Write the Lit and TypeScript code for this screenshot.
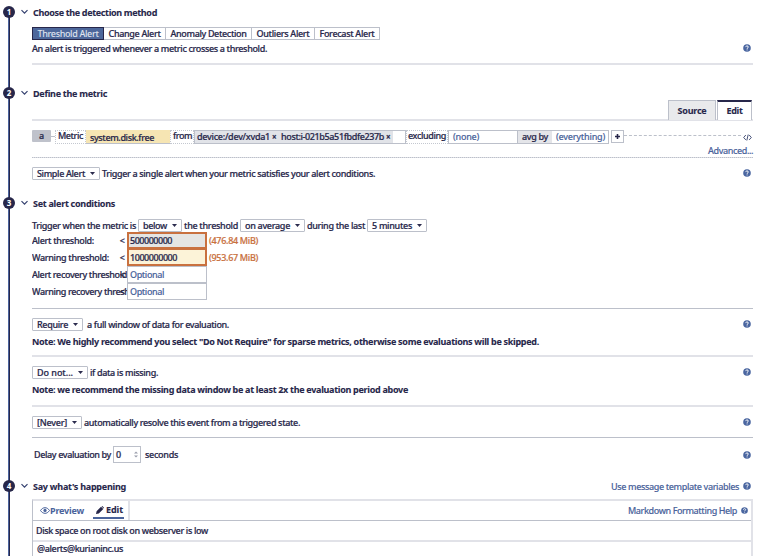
import { LitElement, html, css } from "lit";
import { customElement, property } from "lit/decorators.js";

/** A label whose tracking is set so that it fills the given width. */
@customElement("fit-label")
class FitLabel extends LitElement {
  @property({ type: Number }) w = 0;
  static styles = css`
    :host { display: inline-block; white-space: pre; flex: none; text-align: left; padding-top: 1px; }
    .s { display: inline-block; }
  `;
  render() {
    return html`<span class="s"><slot></slot></span>`;
  }
  firstUpdated() {
    const s = this.renderRoot.querySelector(".s") as HTMLElement;
    const n = (this.textContent || "").length;
    const natural = s.getBoundingClientRect().width;
    this.style.letterSpacing = ((this.w - natural) / n).toFixed(3) + "px";
    this.style.width = this.w + "px";
  }
}

const t = (text: string, w: number, cls = "") =>
  html`<fit-label class=${cls} w=${w}>${text}</fit-label>`;

const help = (small = false) => html`<svg class="help ${small ? "small" : ""}" viewBox="0 0 8 8">
  <circle cx="4" cy="4" r="3.8" fill="#4a66a0"></circle>
  <path d="M2.8 3.1C2.9 2.2 3.4 1.9 4 1.9c.8 0 1.3.5 1.3 1.1C5.3 3.8 4.1 3.9 4.1 4.8M4.1 5.5v.9" fill="none" stroke="#fff" stroke-width="1"></path>
</svg>`;

const caret = html`<svg class="caret" viewBox="0 0 5 3"><path d="M0 0h5L2.5 3z" fill="#2c2c4e"></path></svg>`;

const select = (text: string, w: number, tw: number) =>
  html`<div class="select" style="width:${w}px">${t(text, tw)}${caret}</div>`;

@customElement("app-root")
class AppRoot extends LitElement {
  static styles = css`
    :host {
      display: block; width: 760px; height: 556px; overflow: hidden; background: #fff;
      font: 500 9px/14px "Noto Sans", "Open Sans", sans-serif; color: #27274a;
      -webkit-text-stroke: .2px currentColor;
    }
    * { box-sizing: border-box; }
    svg { display: block; flex: none; }
    .page { display: flex; flex-direction: column; }
    .section { display: grid; grid-template-columns: 18px 14px 721px; }
    .rail { background: linear-gradient(90deg, #4b639c 1px, #27274a 1px) 8px 0 / 2px 100% no-repeat; }
    .first .rail { background-position: 8px 12px; }
    .dot {
      margin: 6px 0 0 3px; width: 12px; height: 12px; border-radius: 50%; background: #27274a; color: #fff;
      font-weight: 700; font-size: 8px; line-height: 12px; text-align: center; -webkit-text-stroke: 0;
    }
    .chev { margin: 9px 0 0 3px; width: 7px; height: 6px; }
    .s1 { height: 81px; } .s2 { height: 110px; } .s3 { height: 283px; } .s4 { height: 82px; }
    .head { height: 24px; display: flex; align-items: center; justify-content: space-between; padding-left: 1px; }
    .b { font-weight: 700; -webkit-text-stroke: .1px currentColor; }
    .blue { color: #4a639b; -webkit-text-stroke: .12px #4a639b; }
    .blue.b { -webkit-text-stroke: 0; }
    .orange { color: #c9713f; -webkit-text-stroke: .2px #c9713f; }
    .row { display: flex; align-items: center; height: 14px; }
    .help { width: 8px; height: 8px; margin: 0 2px 0 auto; }
    .caret { width: 5px; height: 3px; }
    .hr { height: 1px; background: #bcc0ca; }
    .hr.thick { height: 2px; background: #e1e2e8; }
    .hr.dots { background: repeating-linear-gradient(90deg, #bcc0ca 0 1px, #dcdee4 1px 2px); }
    .tabs { display: flex; margin-top: 3px; height: 13px; width: 348px; }
    .tab { display: flex; align-items: center; justify-content: center; border: 1px solid #bcc0ca; border-left-width: 0; }
    .tab.on { background: #4d679b; border: 1px solid #27274a; color: #dfe3ee; -webkit-text-stroke: 0; }
    .m1 { margin-top: 1px; } .m8 { margin-top: 8px; } .m9 { margin-top: 9px; }
    .modes { display: flex; justify-content: flex-end; gap: 1px; margin-top: -5px; height: 20px; padding-right: 1px; }
    .mode { display: flex; align-items: center; justify-content: center; border: 1px solid #bcc0ca; border-bottom: 0; }
    .mode.src { width: 48px; background: #e9eaec; }
    .mode.edit { width: 35px; border-top: 2px solid #27274a; background: #fff; height: 20px; }
    .mode.edit fit-label { padding-top: 0; }
    .modeline { margin-top: -1px; }
    .query { display: flex; height: 14px; margin-top: 9px; align-items: stretch; }
    .query > * { display: flex; align-items: center; }
    .query fit-label { padding-top: 0; }
    .letter { width: 19px; height: 12px; background: #bfc2cb; border-radius: 1px; justify-content: center; }
    .link { width: 4px; height: 1px; background: #bcc0ca; margin-top: 6px; }
    .lbl { border: 1px dotted #c4c8d0; padding-left: 2px; height: 14px; padding-bottom: 2px; }
    .metric { width: 84px; background: #f6e5b3; border-bottom: 1px solid #bcc0ca; padding: 2px 0 0 4px; }
    .tags { width: 212px; border: 1px solid #bcc0ca; padding: 0; }
    .tag { display: flex; align-items: center; background: #e1e3e8; height: 12px; padding-left: 2px; }
    .x { width: 7px; font-size: 8px; margin-left: 2px; font-weight: 700; }
    .none { width: 70px; border: 1px solid #bcc0ca; padding-left: 4px; }
    .avg { width: 34px; background: #e4e5e9; border: 1px solid #bcc0ca; border-width: 1px 0; padding-left: 4px; }
    .every { width: 57px; border: 1px solid #bcc0ca; border-left: 0; padding-left: 4px; }
    .plus { width: 13px; height: 13px; border: 1px solid #bcc0ca; margin-left: 2px; justify-content: center; }
    .dash { flex: 1; height: 6px; border-bottom: 1px dashed #bcc0ca; margin-right: 2px; }
    .code { width: 9px; height: 7px; margin: 4px 1px 0 0; }
    .adv { height: 13px; line-height: 13px; display: flex; justify-content: flex-end; }
    .adv fit-label { padding-top: 0; }
    .select { display: flex; align-items: center; justify-content: space-between; height: 13px; flex: none;
      border: 1px solid #bcc0ca; border-radius: 1px; padding: 0 4px 0 4px; }
    .g2 { width: 2px; } .g4 { width: 4px; }
    .thr { display: grid; grid-template-columns: 95px 80px 60px; grid-auto-rows: 17px; align-items: center; }
    .name { display: flex; overflow: hidden; position: relative; height: 15px; }
    .lt { position: absolute; right: 2px; top: 1px; }
    .field { height: 17px; border: 1px solid #bcc0ca; display: flex; align-items: center; padding-left: 2px; }
    .field.a { border: 2px solid #c9713f; background: #e5e5e3; padding-left: 1px; }
    .field.w { border: 2px solid #c9713f; border-top-width: 1px; background: #fcf3d8; padding-left: 1px; }
    .amt { padding-left: 2px; }
    .num { width: 28px; height: 17px; border: 1px solid #bcc0ca; display: flex; align-items: center;
      justify-content: space-between; padding: 0 2px; }
    .spin { width: 4px; height: 7px; }
    .editor { margin-top: 1px; border: 1px solid #bcc0ca; border-top: 2px solid #e1e2e8; border-right: 2px solid #e1e2e8; height: 60px; }
    .bar { height: 20px; display: flex; align-items: stretch; border-bottom: 1px solid #bcc0ca; }
    .etabs { display: flex; width: 97px; border-right: 2px solid #e1e2e8; padding-left: 7px; }
    .etab { display: flex; align-items: center; height: 18px; }
    .etab.act { margin-left: 9px; border-bottom: 2px solid #4a639b; width: 31px; padding: 1px 0 0 3px; }
    .eye { width: 10px; height: 7px; } .pen { width: 8px; height: 8px; margin-right: 2px; }
    .fmt { display: flex; align-items: center; margin-left: auto; gap: 4px; padding-right: 3px; }
    .help.small { width: 7px; height: 7px; margin-right: 0; }
    .line { height: 21px; padding-left: 3px; display: flex; align-items: center; border-bottom: 2px solid #e1e2e8; }
    .mail { height: 16px; padding-left: 4px; }
    .mail fit-label { padding-top: 0; }
    .msg { display: flex; align-items: center; gap: 4px; }
  `;

  section(n: number, title: string, w: number, body: unknown, extra: unknown = "") {
    return html`<div class="section s${n} ${n === 1 ? "first" : ""}">
      <div class="rail"><div class="dot">${n}</div></div>
      <svg class="chev" viewBox="0 0 7 6"><path d="M.5 1.200l3 3 3-3" fill="none" stroke="#34406f" stroke-width="1.200"></path></svg>
      <div>
        <div class="head">${t(title, w, "b")}${extra}</div>
        ${body}
      </div>
    </div>`;
  }

  render() {
    const methods: [string, number, number][] = [
      ["Threshold Alert", 72, 61], ["Change Alert", 62, 52], ["Anomaly Detection", 86, 76],
      ["Outliers Alert", 63, 53], ["Forecast Alert", 65, 55],
    ];
    const one = html`
      <div class="tabs">
        ${methods.map(([s, w, tw], i) => html`<div class="tab ${i ? "" : "on"}" style="width:${w}px">${t(s, tw)}</div>`)}
      </div>
      <div class="row m1">${t("An alert is triggered whenever a metric crosses a threshold.", 235)}${help()}</div>
      <div class="hr thick m8"></div>`;

    const two = html`
      <div class="modes">
        <div class="mode src">${t("Source", 29, "b")}</div>
        <div class="mode edit">${t("Edit", 16, "b")}</div>
      </div>
      <div class="hr thick modeline"></div>
      <div class="query">
        <div class="letter">${t("a", 5)}</div><div class="link"></div>
        <div class="lbl" style="width:31px">${t("Metric", 25)}</div>
        <div class="metric">${t("system.disk.free", 64)}</div>
        <div class="lbl" style="width:24px">${t("from", 19)}</div>
        <div class="tags">
          <div class="tag">${t("device:/dev/xvda1", 73)}<span class="x">×</span></div>
          <div class="tag">${t("host:i-021b5a51fbdfe237b", 103)}<span class="x">×</span></div>
        </div>
        <div class="lbl" style="width:42px;padding-left:1px">${t("excluding", 38)}</div>
        <div class="none">${t("(none)", 26, "blue")}</div>
        <div class="avg">${t("avg by", 26)}</div>
        <div class="every">${t("(everything)", 49, "blue")}</div>
        <div class="plus"><svg width="7" height="7" viewBox="0 0 7 7"><path d="M3.5 1v5M1 3.5h5" stroke="#27274a" stroke-width="1.6"></path></svg></div>
        <div class="dash"></div>
        <svg class="code" viewBox="0 0 9 7"><path d="M2.8 1L.7 3.5l2.1 2.4M6.2 1l2.1 2.5-2.1 2.4M5.2.5L3.8 6.5" fill="none" stroke="#34406a" stroke-width=".9"></path></svg>
      </div>
      <div class="adv">${t("Advanced...", 45, "blue")}</div>
      <div class="hr dots"></div>
      <div class="row m8">${select("Simple Alert", 68, 48)}<i class="g2"></i>${t("Trigger a single alert when your metric satisfies your alert conditions.", 273)}${help()}</div>`;

    const thr = (name: string, w: number, cls: string, val: string, vw: number, amt = "") => html`
      <div class="name">${t(name, w)}<span class="lt">&lt;</span></div>
      <div class="field ${cls}">${t(val, vw, cls ? "" : "blue")}</div>
      <div class="amt">${amt ? t(amt, 49, "orange") : ""}</div>`;

    const three = html`
      <div class="row" style="margin-top:4px;height:13px">
        ${t("Trigger when the metric is", 104)}<i class="g2"></i>${select("below", 44, 24)}<i class="g2"></i>
        ${t("the threshold", 54)}<i class="g2"></i>${select("on average", 65, 45)}<i class="g2"></i>
        ${t("during the last", 58)}<i class="g2"></i>${select("5 minutes", 60, 40)}
      </div>
      <div class="thr">
        ${thr("Alert threshold:", 62, "a", "500000000", 42, "(476.84 MiB)")}
        ${thr("Warning threshold:", 77, "w", "1000000000", 47, "(953.67 MiB)")}
        ${thr("Alert recovery threshold:", 97, "", "Optional", 34)}
        ${thr("Warning recovery threshold:", 112, "", "Optional", 34)}
      </div>
      <div class="hr" style="margin-top:8px"></div>
      <div class="row m8">${select("Require", 51, 31)}<i class="g4"></i>${t("a full window of data for evaluation.", 142)}${help()}</div>
      <div class="row" style="margin-top:3px">${t('Note: We highly recommend you select "Do Not Require" for sparse metrics, otherwise some evaluations will be skipped.', 507, "b")}</div>
      <div class="hr thick" style="margin-top:7px"></div>
      <div class="row m8">${select("Do not...", 56, 36)}<i class="g2"></i>${t("if data is missing.", 68)}${help()}</div>
      <div class="row" style="margin-top:3px">${t("Note: we recommend the missing data window be at least 2x the evaluation period above", 376, "b")}</div>
      <div class="hr thick m9"></div>
      <div class="row m8">${select("[Never]", 50, 30)}<i class="g2"></i>${t("automatically resolve this event from a triggered state.", 216)}${help()}</div>
      <div class="hr m8"></div>
      <div class="row" style="margin-top:8px;height:17px"><i class="g2"></i>${t("Delay evaluation by", 77)}<i class="g2"></i>
        <div class="num">${t("0", 5)}<svg class="spin" viewBox="0 0 4 7"><path d="M0 2.5L2 .5l2 2zM0 4.5l2 2 2-2z" fill="#9a9dab"></path></svg></div>
        <i class="g4"></i>${t("seconds", 33)}${help()}</div>`;

    const four = html`
      <div class="editor">
        <div class="bar">
          <div class="etabs">
            <div class="etab"><svg class="eye" viewBox="0 0 10 7"><path d="M.5 3.5C2 1.3 3.5.7 5 .7s3 .6 4.5 2.8C8 5.700 6.500 6.300 5 6.300S2 5.700.5 3.500z" fill="none" stroke="#4a639b"></path><circle cx="5" cy="3.400" r="1.600" fill="#4a639b"></circle></svg>${t("Preview", 34, "b blue")}</div>
            <div class="etab act"><svg class="pen" viewBox="0 0 8 8"><path d="M0 8l.6-2.800L5 .7 7.300 3 2.800 7.400zM5.600.4L6.300 0 8 1.700l-.5.800z" fill="#27274a"></path></svg>${t("Edit", 17, "b")}</div>
          </div>
          <div class="fmt">${t("Markdown Formatting Help", 109, "blue")}${help(true)}</div>
        </div>
        <div class="line">${t("Disk space on root disk on webserver is low", 172)}</div>
        <div class="mail">${t("@alerts@kurianinc.us", 86)}</div>
      </div>`;

    return html`<div class="page">
      ${this.section(1, "Choose the detection method", 124, one)}
      ${this.section(2, "Define the metric", 74, two)}
      ${this.section(3, "Set alert conditions", 82, three)}
      ${this.section(4, "Say what's happening", 93, four,
        html`<div class="msg">${t("Use message template variables", 128, "blue")}${help()}</div>`)}
    </div>`;
  }
}
